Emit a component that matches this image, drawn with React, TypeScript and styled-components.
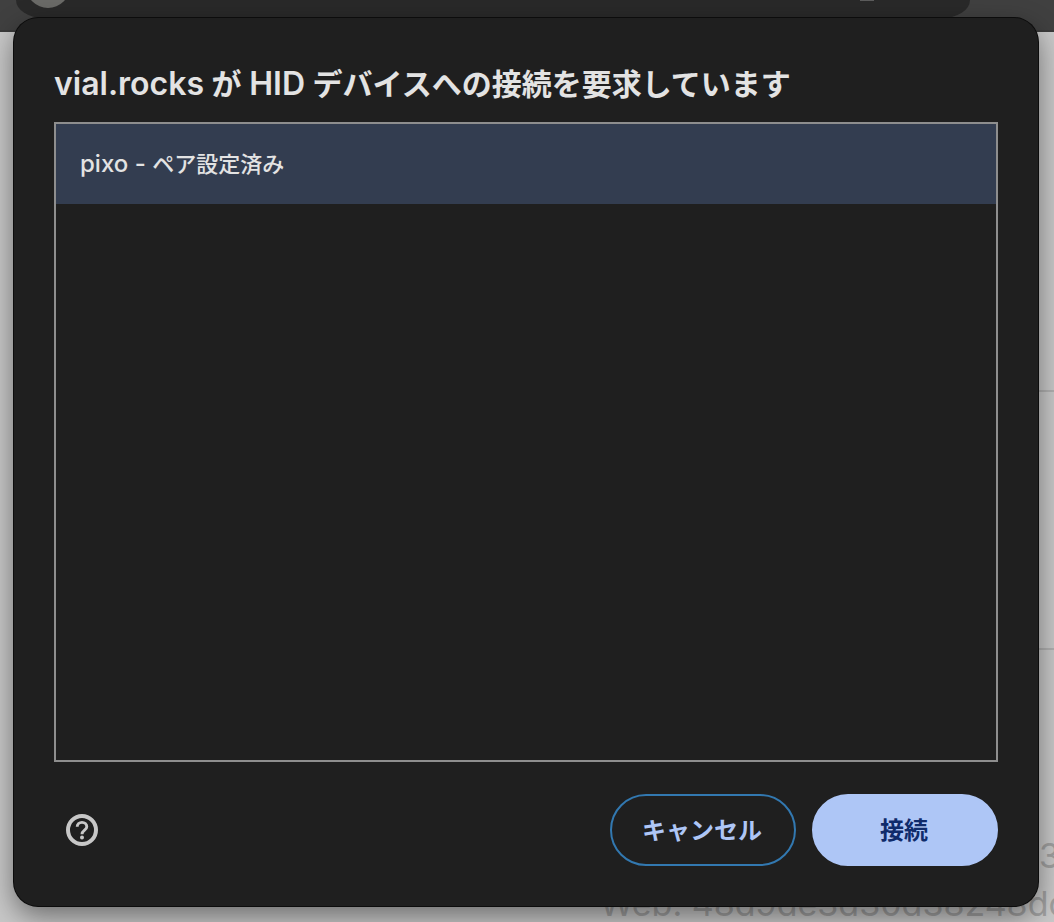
import React from "react";
import styled, { createGlobalStyle } from "styled-components";

const GlobalStyle = createGlobalStyle`
  *, *::before, *::after { box-sizing: border-box; }
  body { margin: 0; background: #c8c8c8; }
  button { font: inherit; cursor: pointer; }
`;

const Screen = styled.div`
  position: relative;
  display: flex;
  flex-direction: column;
  min-height: 100vh;
  overflow: hidden;
  font-family: Inter, "Noto Sans CJK JP", sans-serif;
`;

const BrowserBar = styled.div`
  height: 32px;
  padding: 0 84px 0 16px;
  background: #404040;
  border-bottom: 2px solid #3a3a3a;
`;

const AddressField = styled.div`
  display: flex;
  justify-content: space-between;
  height: 18px;
  padding: 0 96px 0 10px;
  overflow: hidden;
  background: #292929;
  border-radius: 0 0 28px 28px / 0 0 18px 18px;
`;

const SiteBadge = styled.div`
  width: 44px;
  height: 44px;
  margin-top: -36px;
  background: #6a6a67;
  border-radius: 50%;
`;

const FieldMark = styled.div`
  width: 14px;
  height: 1px;
  background: #5c5c5c;
`;

const Page = styled.main`
  display: flex;
  flex: 1;
  flex-direction: column;
  padding-left: 40px;
  background: #c8c8c8;
`;

const PageSection = styled.section<{ $height: number }>`
  height: ${(p) => p.$height}px;
  border-bottom: 2px solid #b0b0b0;
`;

const PageFooter = styled.footer`
  display: flex;
  flex-direction: column;
  align-items: flex-end;
  margin-top: auto;
  margin-bottom: -6px;
  color: #a0a0a0;
  font-size: 34px;
  line-height: 48px;
  white-space: nowrap;
`;

const FooterLine = styled.div<{ $width: number }>`
  width: ${(p) => p.$width}px;
`;

const Dialog = styled.section`
  position: absolute;
  inset: 18px 16px 16px 14px;
  display: flex;
  flex-direction: column;
  padding: 40px;
  color: #e3e3e3;
  background: #1f1f1f;
  border-radius: 24px;
  box-shadow: 0 0 0 1px #0c0c0c, 0 10px 28px #0007;
`;

const Title = styled.h1`
  margin: 0 0 14px;
  padding-top: 2px;
  font-size: 30px;
  font-weight: 600;
  line-height: 48px;
`;

const TitleLatin = styled.span`
  font-size: 32px;
`;

const DeviceList = styled.ul`
  flex: 1;
  margin: 0;
  padding: 0;
  list-style: none;
  border: 2px solid #8e8e8e;
`;

const DeviceButton = styled.button`
  display: block;
  width: 100%;
  height: 80px;
  padding: 0 24px 4px;
  color: inherit;
  font-size: 22px;
  font-weight: 500;
  text-align: left;
  background: #333d50;
  border: 0;
`;

const DeviceName = styled.span`
  font-size: 24px;
`;

const Actions = styled.footer`
  display: flex;
  align-items: center;
  gap: 16px;
  margin-top: 32px;
`;

const HelpButton = styled.button`
  display: flex;
  margin: 0 auto 0 8px;
  padding: 4px;
  color: #c7c7c7;
  background: none;
  border: 0;
`;

const PillButton = styled.button<{ $primary?: boolean }>`
  width: 186px;
  height: 72px;
  padding: 0 2px 4px 0;
  color: ${(p) => (p.$primary ? "#0f2b6b" : "#aec6f6")};
  font-size: 24px;
  font-weight: 600;
  background: ${(p) => (p.$primary ? "#aec6f6" : "transparent")};
  border: 2px solid ${(p) => (p.$primary ? "#aec6f6" : "#3278b0")};
  border-radius: 36px;
`;

const HelpIcon = () => (
  <svg width="32" height="32" viewBox="0 0 32 32" fill="none" stroke="currentColor" aria-hidden="true">
    <circle cx="16" cy="16" r="14" strokeWidth="4" />
    <path d="M11.2 12.8a4.8 4.4 0 0 1 9.6 0c0 3.2-4.8 3.6-4.8 7.4" strokeWidth="2.9" />
    <circle cx="16" cy="23.6" r="2" fill="currentColor" stroke="none" />
  </svg>
);

const App = () => (
  <Screen>
    <GlobalStyle />
    <BrowserBar>
      <AddressField>
        <SiteBadge />
        <FieldMark />
      </AddressField>
    </BrowserBar>
    <Page>
      <PageSection $height={360} />
      <PageSection $height={258} />
      <PageFooter>
        <FooterLine $width={15}>3</FooterLine>
        <FooterLine $width={454}>Web: 48d9de3d30d38248dc</FooterLine>
      </PageFooter>
    </Page>
    <Dialog role="dialog" aria-labelledby="dialog-title">
      <Title id="dialog-title">
        <TitleLatin>vial.rocks</TitleLatin> が <TitleLatin>HID</TitleLatin> デバイスへの接続を要求しています
      </Title>
      <DeviceList>
        <li>
          <DeviceButton type="button">
            <DeviceName>pixo - </DeviceName>ペア設定済み
          </DeviceButton>
        </li>
      </DeviceList>
      <Actions>
        <HelpButton type="button" aria-label="ヘルプ">
          <HelpIcon />
        </HelpButton>
        <PillButton type="button">キャンセル</PillButton>
        <PillButton type="button" $primary>接続</PillButton>
      </Actions>
    </Dialog>
  </Screen>
);

export default App;
